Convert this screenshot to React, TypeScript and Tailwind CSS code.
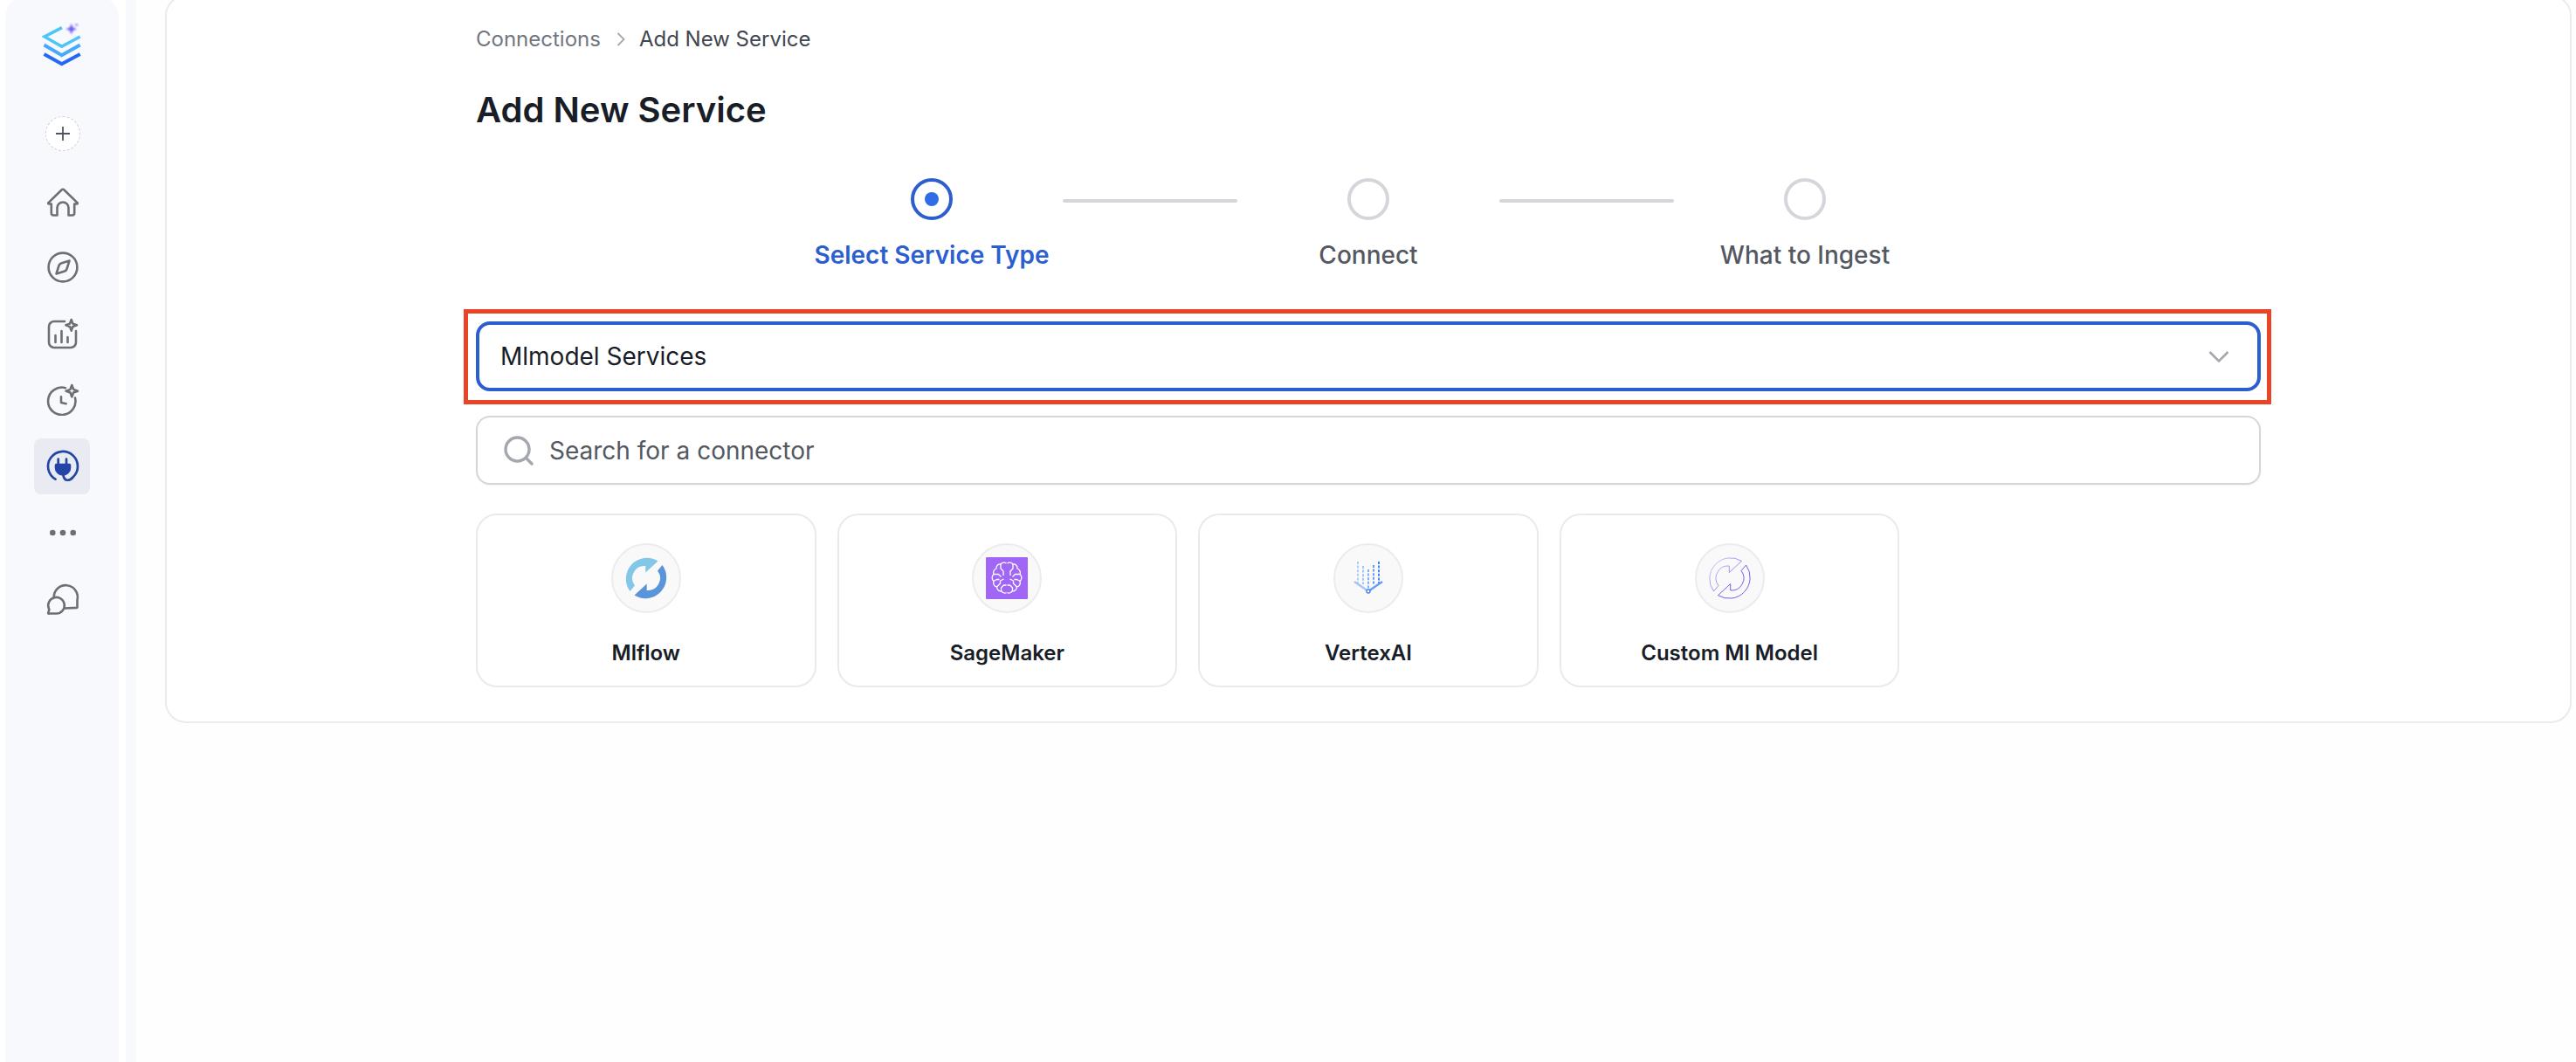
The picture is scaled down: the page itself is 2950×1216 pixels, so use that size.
const sw = "#6b7075";

function Logo() {
  return (
    <svg viewBox="0 0 48 52" className="w-12 h-[52px]" fill="none">
      <defs>
        <filter id="blur" x="-50%" y="-50%" width="200%" height="200%">
          <feGaussianBlur stdDeviation="0.9" />
        </filter>
      </defs>
      <path d="M23 5.7 3 16l19.7 11.3L43.7 16" stroke="#4cc6f7" strokeWidth="3.6" />
      <path d="m2.5 25.5 20.2 11.8 21-11.8" stroke="#48a9fa" strokeWidth="4" />
      <path d="m2.5 36 20.2 11.3L43.7 36" stroke="#2468f5" strokeWidth="4" />
      <g filter="url(#blur)">
        <path d="m33.7 1 1.8 4.5 4.5 1.8-4.5 1.8-1.8 4.5-1.8-4.5-4.5-1.8 4.5-1.8z" fill="#6a5cf5" />
        <circle cx="39.7" cy="2.5" r="1.8" fill="#b79cf6" />
      </g>
    </svg>
  );
}
function Home() {
  return (
    <svg viewBox="0 0 40 40" className="w-10 h-10" fill="none" stroke={sw} strokeWidth="2.6" strokeLinejoin="round">
      <path d="M4 21.5h2.8V32a2.5 2.5 0 0 0 2.5 2.5h4.2V26a6.5 6.5 0 0 1 13 0v8.5h4.2a2.5 2.5 0 0 0 2.5-2.5V21.5H36a.8.8 0 0 0 .5-1.4L21.5 5.5a2 2 0 0 0-3 0L3.5 20.1a.8.8 0 0 0 .5 1.4z" />
    </svg>
  );
}
function Compass() {
  return (
    <svg viewBox="0 0 40 40" className="w-10 h-10" fill="none" stroke={sw} strokeWidth="2.6" strokeLinejoin="round">
      <circle cx="20" cy="20" r="16.4" />
      <path d="m27.5 12.5-9.5 3a4 4 0 0 0-2.5 2.5l-3 9.5 9.5-3a4 4 0 0 0 2.5-2.5z" />
    </svg>
  );
}
function Chart() {
  return (
    <svg viewBox="0 0 40 40" className="w-10 h-10" fill="none" stroke={sw} strokeWidth="2.6" strokeLinecap="round" strokeLinejoin="round">
      <path d="M22 6H10a6 6 0 0 0-6 6v18a6 6 0 0 0 6 6h19a6 6 0 0 0 6-6V17" />
      <path d="M11.5 22v8M18.5 17v13M25.5 24v6" />
      <path d="m29.7 4 1.7 4.6 4.6 1.7-4.6 1.7-1.7 4.6-1.7-4.6-4.6-1.7 4.6-1.7z" />
    </svg>
  );
}
function Clock() {
  return (
    <svg viewBox="0 0 40 40" className="w-10 h-10" fill="none" stroke={sw} strokeWidth="2.6" strokeLinecap="round" strokeLinejoin="round">
      <path d="M23 8.2A15.7 15.7 0 1 0 34 19.5" />
      <path d="M18 18.3V25l5.7 1.3" />
      <path d="m30.3 5 1.8 4.9 4.9 1.8-4.9 1.8-1.8 4.9-1.8-4.9-4.9-1.8 4.9-1.8z" />
    </svg>
  );
}
function Plug() {
  return (
    <svg viewBox="0 0 40 40" className="w-10 h-10" fill="none">
      <path d="M11.5 34.7A17 17 0 1 1 31.5 32.5C28 36.5 21.5 38 20.5 30" stroke="#2444a8" strokeWidth="2.7" strokeLinecap="round" />
      <path d="M12.7 16.7h14.6a2 2 0 0 1 2 2v3a9.3 9 0 0 1-18.6 0v-3a2 2 0 0 1 2-2z" fill="#2444a8" />
      <path d="M14.7 11.7v6M24 11.7v6" stroke="#2444a8" strokeWidth="2.7" strokeLinecap="round" />
    </svg>
  );
}
function Dots() {
  return (
    <svg viewBox="0 0 40 40" className="w-10 h-10" fill={sw}>
      <circle cx="8.3" cy="20" r="3.3" />
      <circle cx="20" cy="20" r="3.3" />
      <circle cx="31.7" cy="20" r="3.3" />
    </svg>
  );
}
function Chat() {
  return (
    <svg viewBox="0 0 40 40" className="w-10 h-10" fill="none" stroke={sw} strokeWidth="2.6" strokeLinecap="round" strokeLinejoin="round">
      <path d="M9.7 19.2A13.6 13.6 0 1 1 36.5 22v8.2a.7.7 0 0 1-.7.7L22 31.5" />
      <path d="M4 37.5h8.5a9.3 9.3 0 1 0-8.6-5.8l.5 1.2-1.2 3.8a.6.6 0 0 0 .8.8z" />
    </svg>
  );
}

const ringLeft = "M37.5 4.4A24 24 0 0 0 5.5 39L11 32.5A14 14 0 0 1 23.3 10V17.5z";
const ringRight = "M10.5 43.6A24 24 0 0 0 42.5 9L37 15.5A14 14 0 0 1 24.7 38V30.5z";

function Mlflow() {
  return (
    <svg viewBox="0 0 48 48" className="w-12 h-12">
      <path d={ringLeft} fill="#82c7e8" />
      <path d={ringRight} fill="#5a94d9" />
    </svg>
  );
}
function SageMaker() {
  const half = (
    <>
      <path d="M23.5 7c-2-1.5-5-1-6.5 1-3-.3-5.5 2-5 5-3 1-4 4-3 6.5-2.5 2-2.5 6 0 8-1 3 .5 6 3.5 6.5 0 3 2.5 5.5 5.5 5 1.5 2 4 2.5 5.5 1.5" />
      <path d="M17 8v5l3 3v5M9 19.5h5.5l3 3M8.5 27.5l4-2h3M12.5 34l4-4v-3l4-2M17.5 39v-4l3-3h3" />
    </>
  );
  return (
    <div className="w-12 h-12 bg-[#a166f5] rounded-[1px]">
      <svg viewBox="0 0 48 48" className="w-12 h-12" fill="none" stroke="#ffffff" strokeWidth="1.3" strokeLinejoin="round">
        {half}
        <g transform="matrix(-1 0 0 1 48 0)">{half}</g>
      </svg>
    </div>
  );
}
function Vertex() {
  const cols: [number, number, number, string][] = [
    [12, 5, 30, "#aecbfa"],
    [18, 10, 31, "#a3c4fa"],
    [24, 14, 36, "#7fadf7"],
    [30, 9, 31, "#669df6"],
    [36, 5, 30, "#4285f4"],
  ];
  return (
    <svg viewBox="0 0 48 48" className="w-12 h-12" fill="none">
      {cols.map(([x, a, b, c]) => (
        <path key={x} d={`M${x} ${a}V${b}`} stroke={c} strokeWidth="2" strokeDasharray="3 1.6" />
      ))}
      <path d="M8 28 24 39" stroke="#a3c4fa" strokeWidth="2.4" />
      <path d="M40 28 24 39" stroke="#669df6" strokeWidth="2.4" />
      <circle cx="24" cy="39" r="2" fill="#fff" stroke="#4285f4" strokeWidth="1.4" />
    </svg>
  );
}
function Custom() {
  return (
    <svg viewBox="0 0 48 48" className="w-12 h-12" fill="none">
      <defs>
        <linearGradient id="cg" x1="0" y1="0" x2="1" y2="1">
          <stop offset="0" stopColor="#d8ccfb" />
          <stop offset="1" stopColor="#5b3fe0" />
        </linearGradient>
      </defs>
      <path d={ringLeft} stroke="url(#cg)" strokeWidth="0.9" />
      <path d={ringRight} stroke="#6a4de8" strokeWidth="0.9" />
    </svg>
  );
}

function Step({ label, active }: { label: string; active?: boolean }) {
  return (
    <div className="w-[300px] flex flex-col items-center">
      {active ? (
        <div className="w-12 h-12 rounded-full border-4 border-[#2c5ed0] flex items-center justify-center">
          <div className="w-4 h-4 rounded-full bg-[#2f6ce5]" />
        </div>
      ) : (
        <div className="w-12 h-12 rounded-full border-4 border-[#d5d6db]" />
      )}
      <div className={`mt-[20px] text-[28px] leading-[40px] whitespace-nowrap ${active ? "font-semibold text-[#2c5ed0]" : "font-medium text-[#535862]"}`}>
        {label}
      </div>
    </div>
  );
}

function Connector({ name, icon }: { name: string; icon: React.ReactNode }) {
  return (
    <div className="h-[199px] rounded-3xl border-2 border-[#e9eaeb] bg-white flex flex-col items-center pt-[32px]">
      <div className="w-20 h-20 rounded-full border-2 border-[#ebecee] bg-[#f9f9f9] flex items-center justify-center">{icon}</div>
      <div className="mt-[28px] text-[24px] leading-[36px] font-semibold text-[#181d27]">{name}</div>
    </div>
  );
}

export default function App() {
  return (
    <div className="h-[1216px] w-full flex overflow-hidden bg-[#fefefe] font-['Inter',sans-serif]">
      <div className="w-[144px] shrink-0 pl-[6px] pr-[8px] bg-white">
        <nav className="h-[1230px] w-[130px] -mt-[4px] pt-[30px] pl-[2px] rounded-t-[24px] bg-[#f8f9fd] flex flex-col items-center">
          <Logo />
          <div className="mt-[55px] w-10 h-10 rounded-full border border-dashed border-[#cfd1d6] bg-white flex items-center justify-center">
            <svg viewBox="0 0 20 20" className="w-5 h-5" fill="none" stroke="#4f555f" strokeWidth="1.8">
              <path d="M10 2v16M2 10h16" />
            </svg>
          </div>
          <div className="mt-[39px]"><Home /></div>
          <div className="mt-[34px]"><Compass /></div>
          <div className="mt-[36px]"><Chart /></div>
          <div className="mt-[34px]"><Clock /></div>
          <div className="mt-[26px] -ml-[2px] w-16 h-16 rounded-lg bg-[#e9ebf2] flex items-center justify-center pl-[2px]"><Plug /></div>
          <div className="mt-[24px]"><Dots /></div>
          <div className="mt-[35px]"><Chat /></div>
        </nav>
      </div>
      <div className="w-[12px] shrink-0 bg-[#f8f9fd]" />
      <div className="flex-1 ml-[33px] mr-[5px]">
        <main className="-mt-[6px] h-[834px] rounded-3xl border-2 border-[#e9ebf1] bg-white px-[354px] pt-[34px]">
          <div className="flex items-center h-[30px] text-[24px] leading-[30px]">
            <span className="text-[#717680]">Connections</span>
            <svg viewBox="0 0 10 16" className="w-[10px] h-4 ml-[18px] mr-[16px]" fill="none" stroke="#a4a7ae" strokeWidth="1.8">
              <path d="m1.5 1 7 7-7 7" />
            </svg>
            <span className="text-[#414651]">Add New Service</span>
          </div>
          <h1 className="mt-[40px] text-[40px] leading-[52px] font-semibold text-[#181d27]">Add New Service</h1>
          <div className="mt-[52px] flex justify-center">
            <Step label="Select Service Type" active />
            <div className="w-[200px] h-1 mt-[24px] rounded-full bg-[#d5d6db]" />
            <Step label="Connect" />
            <div className="w-[200px] h-1 mt-[24px] rounded-full bg-[#d5d6db]" />
            <Step label="What to Ingest" />
          </div>
          <div className="relative mt-[56px] h-[80px] rounded-2xl border-4 border-[#2c5ed0] bg-white pl-[24px] pr-[32px] flex items-center justify-between">
            <span className="text-[28px] text-[#181d27]">Mlmodel Services</span>
            <svg viewBox="0 0 24 15" className="w-6 h-[15px]" fill="none" stroke="#a4a7ae" strokeWidth="2.6">
              <path d="m1.5 2 10.5 10.5L22.5 2" />
            </svg>
            <div className="absolute -top-[18px] -bottom-[19px] -left-[18px] -right-[16px] border-[5px] border-[#e94425]" />
          </div>
          <div className="mt-[28px] h-[79px] rounded-2xl border-2 border-[#d5d6db] bg-white shadow-xs pl-[30px] flex items-center gap-[18px]">
            <svg viewBox="0 0 34 34" className="w-[34px] h-[34px]" fill="none" stroke="#a4a7ae" strokeWidth="3.4" strokeLinecap="round">
              <circle cx="15.5" cy="15.5" r="13.5" />
              <path d="m26 26 6 6" />
            </svg>
            <span className="text-[28px] text-[#535862]">Search for a connector</span>
          </div>
          <div className="mt-[33px] grid grid-cols-5 gap-6">
            <Connector name="Mlflow" icon={<Mlflow />} />
            <Connector name="SageMaker" icon={<SageMaker />} />
            <Connector name="VertexAI" icon={<Vertex />} />
            <Connector name="Custom Ml Model" icon={<Custom />} />
          </div>
        </main>
      </div>
    </div>
  );
}
